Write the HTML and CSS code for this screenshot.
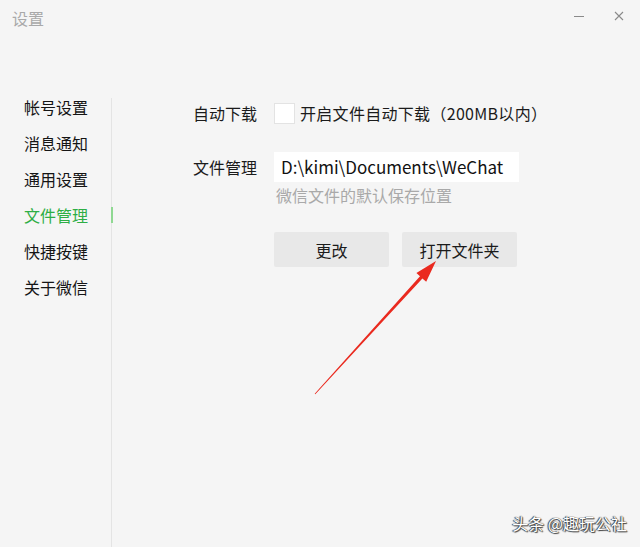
FILE: index.html
```html
<!DOCTYPE html>
<html lang="zh-CN">
<head>
<meta charset="utf-8">
<title>设置</title>
<link rel="stylesheet" href="styles.css">
</head>
<body>
<div class="window">
  <header class="titlebar">
    <span class="title">设置</span>
    <div class="controls">
      <span class="min"></span>
      <svg class="close" width="10" height="10" viewBox="0 0 10 10"><path d="M1 1L9 9M9 1L1 9" stroke="#8a8a8a" stroke-width="1.1" fill="none"/></svg>
    </div>
  </header>
  <div class="main">
    <nav class="sidebar">
      <div class="nav-item">帐号设置</div>
      <div class="nav-item">消息通知</div>
      <div class="nav-item">通用设置</div>
      <div class="nav-item active">文件管理</div>
      <div class="nav-item">快捷按键</div>
      <div class="nav-item">关于微信</div>
    </nav>
    <section class="content">
      <div class="row row-download">
        <span class="label">自动下载</span>
        <span class="checkbox"></span>
        <span class="check-text">开启文件自动下载（200MB以内）</span>
      </div>
      <div class="row row-path">
        <span class="label">文件管理</span>
        <div class="path-input">D:\kimi\Documents\WeChat</div>
      </div>
      <div class="hint">微信文件的默认保存位置</div>
      <div class="buttons">
        <button class="btn">更改</button>
        <button class="btn">打开文件夹</button>
      </div>
    </section>
  </div>
  <svg class="arrow" width="640" height="547" viewBox="0 0 640 547">
    <polygon points="315.3,394.3 422.4,278.5 426.2,281.8 436,261 416.4,272.9 420.0,276.2 314.7,393.7" fill="#ea2a1f"/>
  </svg>
  <div class="watermark">头条 @趣玩公社</div>
</div>
</body>
</html>
```
FILE: styles.css
```css
* { box-sizing: border-box; }
html, body {
  margin: 0;
  padding: 0;
  background: #f5f5f5;
}
body {
  font-family: "Noto Sans CJK SC", "Microsoft YaHei", sans-serif;
  color: #1b1b1b;
}
.window {
  position: relative;
  width: 640px;
  height: 547px;
  display: flex;
  flex-direction: column;
  overflow: hidden;
}
.titlebar {
  height: 98px;
  display: flex;
  justify-content: space-between;
  align-items: flex-start;
  padding: 7px 16px 0 12px;
  flex-shrink: 0;
}
.title {
  font-size: 16px;
  line-height: 22px;
  color: #a9a9a9;
}
.controls {
  display: flex;
  align-items: center;
  gap: 30px;
  padding-top: 4px;
}
.min {
  display: block;
  width: 10px;
  height: 1px;
  background: #8a8a8a;
}
.close { display: block; }
.main {
  flex: 1;
  display: flex;
}
.sidebar {
  width: 112px;
  border-right: 1px solid #e4e4e4;
  padding-left: 24px;
  display: flex;
  flex-direction: column;
  gap: 18px;
}
.nav-item {
  position: relative;
  font-size: 16px;
  line-height: 18px;
  height: 18px;
  color: #151515;
  white-space: nowrap;
}
.nav-item.active { color: #2eae45; }
.nav-item.active::after {
  content: "";
  position: absolute;
  right: -2px;
  top: 1px;
  width: 2px;
  height: 16px;
  background: #8fd892;
}
.content {
  flex: 1;
  padding-left: 81px;
  padding-top: 5px;
}
.row {
  display: flex;
  align-items: center;
}
.label {
  width: 81px;
  flex-shrink: 0;
  font-size: 16px;
  line-height: 21px;
}
.checkbox {
  width: 21px;
  height: 21px;
  background: #fff;
  border: 1px solid #e3e3e3;
  margin-right: 5px;
}
.check-text {
  font-size: 16px;
  line-height: 21px;
  letter-spacing: 0.3px;
}
.row-path { margin-top: 28px; }
.path-input {
  width: 245px;
  height: 30px;
  background: #fff;
  font-size: 17px;
  line-height: 30px;
  padding-left: 7px;
  color: #111;
  white-space: nowrap;
}
.hint {
  margin-left: 83px;
  margin-top: 3px;
  font-size: 16px;
  line-height: 20px;
  color: #a9a9a9;
}
.buttons {
  margin-left: 81px;
  margin-top: 27px;
  display: flex;
  gap: 13px;
}
.btn {
  width: 115px;
  height: 35px;
  border: none;
  border-radius: 2px;
  background: #e8e8e8;
  font-family: inherit;
  font-size: 16px;
  color: #1b1b1b;
  padding: 0;
}
.arrow {
  position: absolute;
  left: 0;
  top: 0;
  pointer-events: none;
}
.watermark {
  position: absolute;
  right: 13px;
  bottom: 14px;
  font-size: 16px;
  line-height: 20px;
  color: #fff;
  text-shadow: 0 0 1px #222, 1px 1px 1px #444, -1px 0 1px #333;
}
```
